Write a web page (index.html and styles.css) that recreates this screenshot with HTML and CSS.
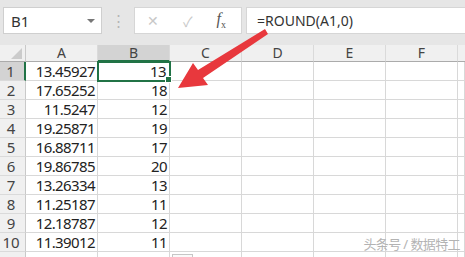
FILE: index.html
```html
<!DOCTYPE html>
<html lang="zh-CN">
<head>
  <meta charset="UTF-8">
  <title>ROUND</title>
  <link rel="stylesheet" href="styles.css">
</head>
<body>

  <div id="app">
    <div class="toolbar">
      <div class="namebox">
        <span>B1</span>
        <span class="caret"></span>
      </div>
      <div class="grip">⋮</div>
      <div class="fx-buttons">
        <span class="fx-btn">✕</span>
        <span class="fx-btn">✓</span>
        <span class="fx-btn fx"><i>f</i><sub>x</sub></span>
      </div>
      <div class="formula">=ROUND(A1,0)</div>
    </div>

    <div class="sheet" id="sheet">
      <div class="hd corner"><span class="tri"></span></div>
      <div class="hd">A</div>
      <div class="hd sel-col">B</div>
      <div class="hd">C</div>
      <div class="hd">D</div>
      <div class="hd">E</div>
      <div class="hd">F</div>
      <div class="hd last"></div>
    </div>

    <svg class="arrow" width="465" height="257" viewBox="0 0 465 257">
      <path d="M178 88 L193 63 L198 70 L265 29 L268 34 L203 78 L208 85 Z" fill="#e8383d"/>
    </svg>

    <div class="quick"></div>
    <div class="watermark">头条号 / 数据特工</div>
  </div>

  <script>
    const data = [
      ["13.45927", "13"],
      ["17.65252", "18"],
      ["11.5247", "12"],
      ["19.25871", "19"],
      ["16.88711", "17"],
      ["19.86785", "20"],
      ["13.26334", "13"],
      ["11.25187", "11"],
      ["12.18787", "12"],
      ["11.39012", "11"],
      ["", ""]
    ];

    const sheet = document.getElementById("sheet");

    data.forEach((row, i) => {
      let html = `<div class="rh${i === 0 ? ' sel-row' : ''}">${i < 10 ? i + 1 : ''}</div>`;
      html += `<div class="cell">${row[0]}</div>`;
      html += `<div class="cell${i === 0 ? ' active' : ''}">${row[1]}</div>`;
      for (let c = 0; c < 5; c++) {
        html += `<div class="cell"></div>`;
      }
      sheet.insertAdjacentHTML("beforeend", html);
    });
  </script>

</body>
</html>
```

FILE: styles.css
```css
body {
  margin: 0;
  width: 465px;
  height: 257px;
  overflow: hidden;
  background: #e6e6e6;
  font-family: "Noto Sans", "Noto Sans CJK SC", sans-serif;
}

#app {
  position: relative;
  width: 465px;
  height: 257px;
  overflow: hidden;
}

.toolbar {
  display: flex;
  align-items: stretch;
  height: 27px;
  padding: 7px 0 11px 3px;
}

.namebox {
  width: 99px;
  background: #fff;
  border: 1px solid #cfcfcf;
  display: flex;
  align-items: center;
  justify-content: space-between;
  padding: 0 6px 0 7px;
  box-sizing: border-box;
  font-size: 15px;
  color: #333;
}

.caret {
  width: 0;
  height: 0;
  border-left: 4px solid transparent;
  border-right: 4px solid transparent;
  border-top: 4px solid #777;
}

.grip {
  width: 32px;
  text-align: center;
  color: #b5b5b5;
  font-size: 15px;
  line-height: 27px;
}

.fx-buttons {
  width: 108px;
  background: #fff;
  border: 1px solid #d6d6d6;
  box-sizing: border-box;
  display: flex;
  align-items: center;
  gap: 24px;
  padding-left: 12px;
}

.fx-btn {
  color: #c8c8c8;
  font-size: 14px;
}

.fx {
  color: #555;
  font-family: "Liberation Serif", serif;
  font-size: 16px;
}

.fx sub {
  font-size: 10px;
}

.formula {
  flex: 1;
  margin-left: 4px;
  background: #fff;
  border: 1px solid #d6d6d6;
  border-right: none;
  padding-left: 10px;
  font-size: 14px;
  line-height: 25px;
  color: #333;
}

.sheet {
  display: grid;
  grid-template-columns: 26px repeat(6, 72px) 1fr;
  grid-template-rows: 17px;
  grid-auto-rows: 19px;
  background: #fff;
}

.hd {
  background: #f0f0f0;
  border-right: 1px solid #dadada;
  border-bottom: 1px solid #ababab;
  box-sizing: border-box;
  text-align: center;
  font-size: 14px;
  line-height: 16px;
  color: #444;
}

.hd.last {
  border-right: none;
}

.corner {
  position: relative;
  border-right: 1px solid #c9c9c9;
}

.tri {
  position: absolute;
  right: 3px;
  bottom: 2px;
  width: 0;
  height: 0;
  border-left: 11px solid transparent;
  border-bottom: 11px solid #cbcbcb;
}

.sel-col {
  background: #d3d3d3;
  border-bottom: 2px solid #217346;
}

.rh {
  background: #f0f0f0;
  border-right: 1px solid #c9c9c9;
  border-bottom: 1px solid #dadada;
  box-sizing: border-box;
  text-align: center;
  padding-right: 3px;
  font-size: 15px;
  line-height: 19px;
  color: #444;
}

.sel-row {
  background: #d3d3d3;
  border-right: 2px solid #217346;
}

.cell {
  border-right: 1px solid #d8d8d8;
  border-bottom: 1px solid #d8d8d8;
  box-sizing: border-box;
  text-align: right;
  padding-right: 2px;
  font-size: 15px;
  letter-spacing: -0.6px;
  line-height: 19px;
  color: #222;
}

.cell.active {
  position: relative;
  outline: 2px solid #217346;
  outline-offset: -1px;
  padding-right: 3px;
}

.cell.active::after {
  content: "";
  position: absolute;
  right: -3px;
  bottom: -3px;
  width: 5px;
  height: 5px;
  background: #217346;
  border: 1px solid #fff;
}

.arrow {
  position: absolute;
  left: 0;
  top: 0;
}

.quick {
  position: absolute;
  left: 172px;
  top: 254px;
  width: 19px;
  height: 10px;
  border: 1px solid #c6c6c6;
  background: #fafafa;
}

.watermark {
  position: absolute;
  right: 5px;
  bottom: 4px;
  font-size: 13px;
  color: #b3b3b3;
  letter-spacing: -0.6px;
}
```
